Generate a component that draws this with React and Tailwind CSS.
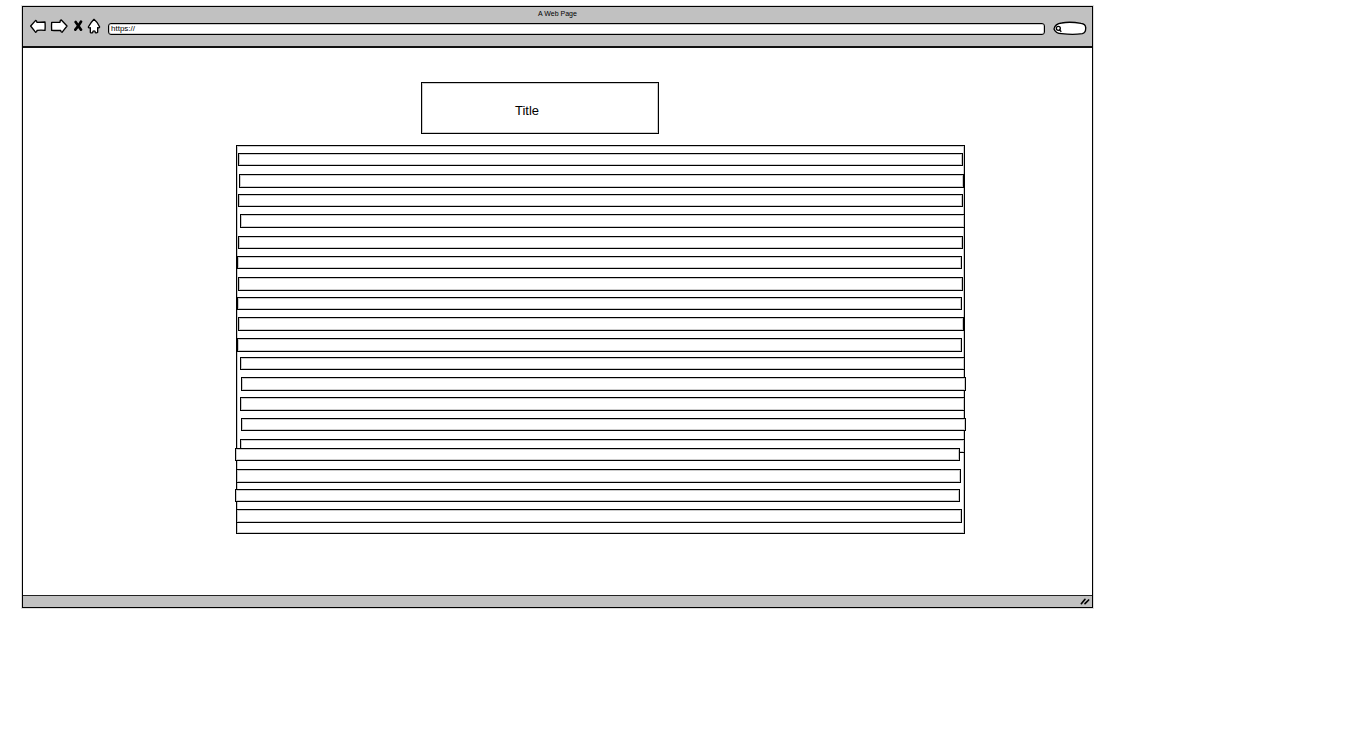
const rows = [
  'mt-[7px] h-[13px] ml-px mr-px',
  'mt-2 h-[14px] ml-0.5 mr-0',
  'mt-1.5 h-[13px] ml-px mr-px',
  'mt-[7px] h-[14px] ml-[3px] -mr-px',
  'mt-2 h-[13px] ml-px mr-px',
  'mt-[7px] h-[13px] ml-0 mr-0.5',
  'mt-2 h-[14px] ml-px mr-px',
  'mt-1.5 h-[13px] ml-0 mr-0.5',
  'mt-[7px] h-[14px] ml-px mr-0',
  'mt-[7px] h-[14px] ml-0 mr-0.5',
  'mt-[5px] h-[13px] ml-[3px] -mr-px',
  'mt-[7px] h-[14px] ml-1 -mr-0.5',
  'mt-1.5 h-[14px] ml-[3px] -mr-px',
  'mt-[7px] h-[13px] ml-1 -mr-0.5',
  'mt-2 h-[14px] ml-[3px] -mr-px',
  '-mt-[5px] h-[13px] -ml-0.5 mr-1',
  'mt-2 h-[14px] -ml-px mr-[3px]',
  'mt-1.5 h-[13px] -ml-0.5 mr-1',
  'mt-[7px] h-[14px] -ml-px mr-0.5',
];

function IconButton({ label, className, viewBox, children }) {
  return (
    <button type="button" aria-label={label} className={`h-[17px] shrink-0 ${className}`}>
      <svg
        viewBox={viewBox}
        className="block h-full w-full"
        fill="#fff"
        stroke="#000"
        strokeWidth="4"
        strokeLinejoin="round"
        strokeLinecap="round"
      >
        {children}
      </svg>
    </button>
  );
}

function Toolbar() {
  return (
    <header className="border-b-2 border-[#111] bg-[#c1c1c1] pb-[11px]">
      <h1 className="pt-px text-center text-[7px] leading-[11px]">A Web Page</h1>
      <div className="-mt-px flex items-end pl-[7px] pr-[5px]">
        <nav className="flex gap-1">
          <IconButton label="Back" className="w-4" viewBox="44 54 48 51">
            <path d="M46 78 L61 61 Q64 62 65 67 Q78 66 89 66 Q90 79 89 91 Q77 90 65 91 Q65 97 61 97 Z" />
          </IconButton>
          <IconButton label="Forward" className="w-[18px]" viewBox="104 54 54 51">
            <path d="M109 67 Q122 67 134 67 Q134 60 138 60 L155 78 L140 97 Q136 97 136 91 Q123 92 109 91 Q108 79 109 67 Z" />
          </IconButton>
          <IconButton label="Stop" className="ml-0.5 w-[9px]" viewBox="176 54 27 51">
            <path d="M181 66 L197 89 M197 65 Q192 75 180 89" fill="none" strokeWidth="8" />
          </IconButton>
          <IconButton label="Home" className="w-[14px]" viewBox="216 54 42 51">
            <path d="M237 58 Q248 67 254 81 Q252 85 248 83 L248 97 Q245 100 241 98 L240 94 Q237 91 234 94 L233 98 Q228 100 226 97 L226 83 Q221 85 220 81 Q227 68 237 58 Z" />
          </IconButton>
        </nav>
        <input
          type="text"
          aria-label="Address"
          defaultValue="https://"
          className="ml-[7px] h-3 min-w-0 flex-1 rounded-[3px] border border-black bg-white px-0.5 pb-px text-[8px] leading-[9px] shadow-[inset_0_0_0_1px_#0003] outline-none"
        />
        <label className="relative ml-2 flex h-[14px] w-[34px] shrink-0 items-center">
          <svg viewBox="0 0 102 42" className="absolute inset-0 h-full w-full" fill="#fff" stroke="#000" strokeWidth="4" strokeLinejoin="round">
            <path d="M3 24 Q6 8 26 6 Q50 1 84 7 Q98 9 98 20 Q99 35 88 38 Q60 42 26 38 Q8 38 3 24 Z" />
            <circle cx="16" cy="22" r="6" strokeWidth="4" />
            <path d="M19 26 L25 32" />
          </svg>
          <input
            type="text"
            aria-label="Search"
            className="relative ml-2.5 w-5 bg-transparent text-[8px] leading-[10px] outline-none"
          />
        </label>
      </div>
    </header>
  );
}

export default function App() {
  return (
    <div className="min-h-screen bg-white pb-6 pl-[22px] pr-[268px] pt-1.5 font-['Liberation_Sans',Arial,sans-serif] text-black">
      <div className="border border-black shadow-[0_0_0_1px_#0002]">
        <Toolbar />
        <main className="flex flex-col pb-[61px] pl-[213px] pr-[127px] pt-[34px]">
          <h2 className="ml-[185px] flex h-[52px] w-[238px] items-center justify-center border border-black pr-[26px] pt-1.5 text-[13px] leading-4 shadow-[inset_0_0_0_1px_#0003]">
            Title
          </h2>
          <ul className="mt-[11px] border border-black pb-[10px] shadow-[inset_0_0_0_1px_#0003]">
            {rows.map((row, i) => (
              <li key={i} className={`border border-black bg-white shadow-[inset_0_0_0_1px_#0003] ${row}`} />
            ))}
          </ul>
        </main>
        <footer className="flex h-3 items-center justify-end border-t border-[#222] bg-[#c1c1c1] pr-0.5">
          <svg viewBox="0 0 30 27" className="h-[9px] w-[10px]" stroke="#000" strokeWidth="5" strokeLinecap="round">
            <path d="M4 20 L15 7 M15 20 L26 9" />
          </svg>
        </footer>
      </div>
    </div>
  );
}
